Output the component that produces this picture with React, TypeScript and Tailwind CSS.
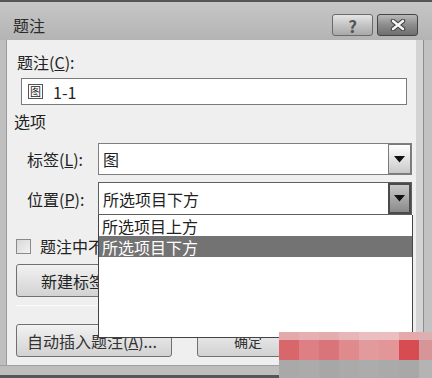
import React from "react";

const font = { fontFamily: '"Noto Sans CJK SC", "Noto Sans", sans-serif' };

function Tri() {
  return (
    <svg width="11" height="7" viewBox="0 0 11 7">
      <path d="M0 0 H11 L5.5 6.5 Z" fill="#111" />
    </svg>
  );
}

export default function App() {
  const mosaicTop = ["#e3a9ab", "#e6b0b2", "#e4acae", "#e8b6b8", "#ebbfc0", "#ebbfc0", "#e6a9ab", "#dcb0b0"];
  const mosaicMid = ["#d8676c", "#dd7f84", "#d9757a", "#df8b8e", "#e39a9c", "#e29698", "#d64c50", "#d69596"];
  const mosaicBot = ["#a9a9a9", "#ababab", "#a7a7a7", "#aaaaaa", "#acacac", "#aaaaaa", "#a8a8a8", "#b4b4b4"];
  return (
    <div
      className="relative w-[432px] h-[378px] overflow-hidden flex flex-col bg-[#bdbdbd] text-[#222]"
      style={font}
    >
      {/* title bar */}
      <div className="h-[40px] flex items-start border-t-2 border-[#555] bg-gradient-to-b from-[#c6c6c6] to-[#b4b4b4]">
        <div className="pl-[13px] pt-[13px] text-[16px] leading-[20px] text-[#2a2a2a]">题注</div>
        <div className="ml-auto flex gap-[4px] pt-[12px] pr-[14px]">
          <div className="w-[41px] h-[22px] rounded-[3px] border border-[#6a6a6a] bg-gradient-to-b from-[#e6e6e6] via-[#c4c4c4] to-[#a9a9a9] flex items-center justify-center text-[17px] font-bold text-[#555] leading-none">
            ?
          </div>
          <div className="w-[41px] h-[22px] rounded-[3px] border border-[#444] bg-gradient-to-b from-[#b9b9b9] via-[#8c8c8c] to-[#6f6f6f] flex items-center justify-center">
            <svg width="16" height="12" viewBox="0 0 16 12">
              <path d="M3 2 L13 10 M13 2 L3 10" stroke="#3a3a3a" strokeWidth="4.5" strokeLinecap="round" />
              <path d="M3 2 L13 10 M13 2 L3 10" stroke="#f4f4f4" strokeWidth="2.6" strokeLinecap="round" />
            </svg>
          </div>
        </div>
      </div>

      {/* middle */}
      <div className="flex flex-1">
        <div className="w-[7px] bg-[#bfbfbf] border-r border-[#9a9a9a]" />
        <div className="relative w-[409px] h-[325px] bg-[#efefef] flex flex-col text-[16px] leading-[18px]">
          <div className="ml-[10px] mt-[13px]">
            题注(<span className="underline">C</span>):
          </div>
          <div className="ml-[14px] mt-[7px] w-[386px] h-[27px] bg-white border border-[#7a7a7a] flex items-center">
            <span className="ml-[6px] w-[15px] h-[15px] border border-[#555] text-[11px] leading-[13px] flex items-center justify-center">
              图
            </span>
            <span className="ml-[10px] text-[16px]">1-1</span>
          </div>
          <div className="ml-[7px] mt-[7px]">选项</div>

          <div className="flex items-center mt-[13px] h-[32px]">
            <div className="ml-[20px] w-[71px]">
              标签(<span className="underline">L</span>):
            </div>
            <div className="w-[314px] h-[32px] bg-white border border-[#7f7f7f] flex items-center">
              <span className="ml-[4px] flex-1">图</span>
              <div className="w-[23px] h-[30px] border border-[#7a7a7a] bg-gradient-to-b from-[#ffffff] to-[#c9c9c9] flex items-center justify-center">
                <Tri />
              </div>
            </div>
          </div>

          <div className="flex items-center mt-[7px] h-[33px]">
            <div className="ml-[20px] w-[71px]">
              位置(<span className="underline">P</span>):
            </div>
            <div className="w-[314px] h-[33px] bg-white border border-[#5f5f5f] flex items-center">
              <span className="ml-[4px] flex-1">所选项目下方</span>
              <div className="w-[23px] h-[31px] border-2 border-[#4a4a4a] bg-gradient-to-b from-[#c8c8c8] to-[#8a8a8a] flex items-center justify-center">
                <Tri />
              </div>
            </div>
          </div>

          <div className="flex items-center mt-[22px] ml-[9px]">
            <div className="w-[15px] h-[15px] border border-[#8a8a8a] bg-gradient-to-br from-[#d8d8d8] to-[#f2f2f2]" />
            <span className="ml-[9px] w-[58px] overflow-hidden whitespace-nowrap">题注中不包含标签(E)</span>
          </div>

          <div className="mt-[9px] ml-[9px] w-[156px] h-[33px] rounded-[3px] border border-[#707070] bg-gradient-to-b from-[#f2f2f2] to-[#d2d2d2] flex items-center pl-[24px]">
            <span className="w-[58px] overflow-hidden whitespace-nowrap">新建标签(N)...</span>
          </div>

          <div className="mt-[8px] mx-[9px] h-[1px] bg-[#d9d9d9] border-b border-[#fafafa]" />

          <div className="flex mt-[18px] gap-[25px]">
            <div className="ml-[9px] w-[156px] h-[33px] rounded-[3px] border border-[#707070] bg-gradient-to-b from-[#f2f2f2] to-[#d2d2d2] flex items-center pl-[10px] text-[#333]">
              自动插入题注(<span className="underline">A</span>)...
            </div>
            <div className="w-[110px] h-[33px] rounded-[3px] border border-[#707070] bg-gradient-to-b from-[#f2f2f2] to-[#d2d2d2] flex items-center pl-[36px] text-[14px] text-[#333]">
              确定
            </div>
          </div>

          {/* dropdown list overlay */}
          <div className="absolute left-[91px] top-[175px] w-[315px] h-[123px] bg-white border-x border-b border-[#444]">
            <div className="h-[21px] pl-[3px] flex items-center">所选项目上方</div>
            <div className="h-[21px] pl-[3px] flex items-center bg-[#737373] text-white">所选项目下方</div>
          </div>
        </div>
        <div className="w-[16px] bg-[#c6c6c6] flex">
          <div className="w-[7px] bg-[#d4d4d4]" />
          <div className="w-[1px] bg-[#8e8e8e]" />
          <div className="flex-1 bg-[#c2c2c2]" />
        </div>
      </div>
      <div className="h-[13px] bg-[#bdbdbd] border-t border-[#a0a0a0] border-b-[3px] border-b-[#555]" />

      {/* mosaic watermark overlay */}
      <div className="absolute left-[279px] top-[332px] flex flex-col">
        <div className="flex">
          {mosaicTop.map((c, i) => (
            <div key={i} className="w-[20px] h-[8px]" style={{ backgroundColor: c }} />
          ))}
        </div>
        <div className="flex">
          {mosaicMid.map((c, i) => (
            <div key={i} className="w-[20px] h-[20px]" style={{ backgroundColor: c }} />
          ))}
        </div>
        <div className="flex">
          {mosaicBot.map((c, i) => (
            <div key={i} className="w-[20px] h-[18px]" style={{ backgroundColor: c }} />
          ))}
        </div>
      </div>
    </div>
  );
}
